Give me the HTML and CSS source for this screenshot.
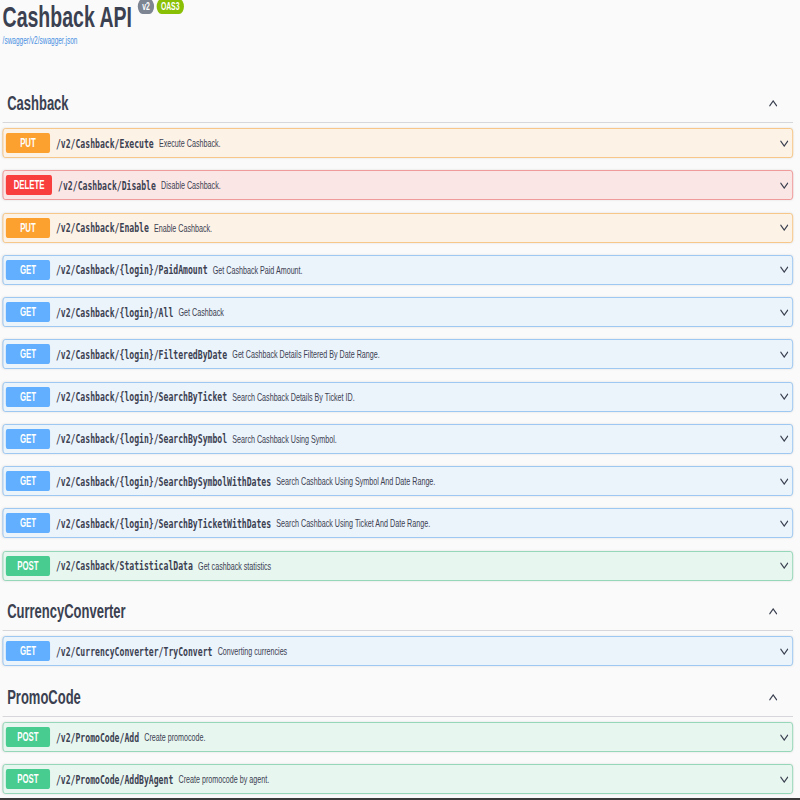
FILE: index.html
```html
<!DOCTYPE html>
<html lang="en">
<head>
<meta charset="utf-8">
<title>Cashback API</title>
<link rel="stylesheet" href="styles.css">
</head>
<body>
<div class="frame">
<div class="page">
  <div class="info">
    <h1 class="title">Cashback API <span class="stamp stamp-v">v2</span><span class="stamp stamp-oas">OAS3</span></h1>
    <a class="spec-link" href="#">/swagger/v2/swagger.json</a>
  </div>

  <section class="tag">
    <div class="tag-header">
      <h3 class="tag-name">Cashback</h3>
      <svg class="caret" viewBox="0 0 15 8" width="15" height="7"><polyline points="1,7 7.5,1 14,7"/></svg>
    </div>
    <div class="op op-put"><span class="method">PUT</span><span class="path">/v2/Cashback/Execute</span><span class="desc">Execute Cashback.</span><svg class="chev" viewBox="0 0 15 8" width="15" height="7"><polyline points="1,1 7.5,7 14,1"/></svg></div>
    <div class="op op-delete"><span class="method">DELETE</span><span class="path">/v2/Cashback/Disable</span><span class="desc">Disable Cashback.</span><svg class="chev" viewBox="0 0 15 8" width="15" height="7"><polyline points="1,1 7.5,7 14,1"/></svg></div>
    <div class="op op-put"><span class="method">PUT</span><span class="path">/v2/Cashback/Enable</span><span class="desc">Enable Cashback.</span><svg class="chev" viewBox="0 0 15 8" width="15" height="7"><polyline points="1,1 7.5,7 14,1"/></svg></div>
    <div class="op op-get"><span class="method">GET</span><span class="path">/v2/Cashback/{login}/PaidAmount</span><span class="desc">Get Cashback Paid Amount.</span><svg class="chev" viewBox="0 0 15 8" width="15" height="7"><polyline points="1,1 7.5,7 14,1"/></svg></div>
    <div class="op op-get"><span class="method">GET</span><span class="path">/v2/Cashback/{login}/All</span><span class="desc">Get Cashback</span><svg class="chev" viewBox="0 0 15 8" width="15" height="7"><polyline points="1,1 7.5,7 14,1"/></svg></div>
    <div class="op op-get"><span class="method">GET</span><span class="path">/v2/Cashback/{login}/FilteredByDate</span><span class="desc">Get Cashback Details Filtered By Date Range.</span><svg class="chev" viewBox="0 0 15 8" width="15" height="7"><polyline points="1,1 7.5,7 14,1"/></svg></div>
    <div class="op op-get"><span class="method">GET</span><span class="path">/v2/Cashback/{login}/SearchByTicket</span><span class="desc">Search Cashback Details By Ticket ID.</span><svg class="chev" viewBox="0 0 15 8" width="15" height="7"><polyline points="1,1 7.5,7 14,1"/></svg></div>
    <div class="op op-get"><span class="method">GET</span><span class="path">/v2/Cashback/{login}/SearchBySymbol</span><span class="desc">Search Cashback Using Symbol.</span><svg class="chev" viewBox="0 0 15 8" width="15" height="7"><polyline points="1,1 7.5,7 14,1"/></svg></div>
    <div class="op op-get"><span class="method">GET</span><span class="path">/v2/Cashback/{login}/SearchBySymbolWithDates</span><span class="desc">Search Cashback Using Symbol And Date Range.</span><svg class="chev" viewBox="0 0 15 8" width="15" height="7"><polyline points="1,1 7.5,7 14,1"/></svg></div>
    <div class="op op-get"><span class="method">GET</span><span class="path">/v2/Cashback/{login}/SearchByTicketWithDates</span><span class="desc">Search Cashback Using Ticket And Date Range.</span><svg class="chev" viewBox="0 0 15 8" width="15" height="7"><polyline points="1,1 7.5,7 14,1"/></svg></div>
    <div class="op op-post"><span class="method">POST</span><span class="path">/v2/Cashback/StatisticalData</span><span class="desc">Get cashback statistics</span><svg class="chev" viewBox="0 0 15 8" width="15" height="7"><polyline points="1,1 7.5,7 14,1"/></svg></div>
  </section>

  <section class="tag">
    <div class="tag-header">
      <h3 class="tag-name">CurrencyConverter</h3>
      <svg class="caret" viewBox="0 0 15 8" width="15" height="7"><polyline points="1,7 7.5,1 14,7"/></svg>
    </div>
    <div class="op op-get"><span class="method">GET</span><span class="path">/v2/CurrencyConverter/TryConvert</span><span class="desc">Converting currencies</span><svg class="chev" viewBox="0 0 15 8" width="15" height="7"><polyline points="1,1 7.5,7 14,1"/></svg></div>
  </section>

  <section class="tag">
    <div class="tag-header">
      <h3 class="tag-name">PromoCode</h3>
      <svg class="caret" viewBox="0 0 15 8" width="15" height="7"><polyline points="1,7 7.5,1 14,7"/></svg>
    </div>
    <div class="op op-post"><span class="method">POST</span><span class="path">/v2/PromoCode/Add</span><span class="desc">Create promocode.</span><svg class="chev" viewBox="0 0 15 8" width="15" height="7"><polyline points="1,1 7.5,7 14,1"/></svg></div>
    <div class="op op-post"><span class="method">POST</span><span class="path">/v2/PromoCode/AddByAgent</span><span class="desc">Create promocode by agent.</span><svg class="chev" viewBox="0 0 15 8" width="15" height="7"><polyline points="1,1 7.5,7 14,1"/></svg></div>
  </section>
</div>
</div>
</body>
</html>
```

FILE: styles.css
```css
html, body {
  margin: 0;
  padding: 0;
  overflow: hidden;
  background: #fafafa;
}

body {
  font-family: "Liberation Sans", Arial, sans-serif;
  color: #3b4151;
}

body::after {
  content: "";
  position: fixed;
  left: 0;
  right: 0;
  bottom: 0;
  height: 2px;
  background: #3a3a3a;
}

/* clip the squeezed page to the window width */
.frame {
  width: 800px;
  overflow: hidden;
}

/* the screenshot is horizontally condensed: lay out at natural width, then squeeze */
.page {
  width: 1231px;
  box-sizing: border-box;
  padding: 0 11px 0 4px;
  margin-right: -431px;
  transform: scaleX(0.65);
  transform-origin: 0 0;
}

.info {
  margin-bottom: 38px;
}

.title {
  margin: 0;
  font-size: 30px;
  font-weight: 700;
  line-height: 34.5px;
  color: #3b4151;
  white-space: nowrap;
}

.stamp {
  display: inline-block;
  vertical-align: top;
  height: 15px;
  line-height: 15px;
  padding: 0 6.5px;
  margin-top: -1px;
  border-radius: 8px;
  font-size: 10.5px;
  font-weight: 700;
  color: #fff;
}

.stamp-v {
  background: #7d8492;
  margin-left: 1px;
}

.stamp-oas {
  background: #89bf04;
  margin-left: 4px;
}

.spec-link {
  display: block;
  font-size: 10px;
  line-height: 12px;
  color: #4990e2;
  text-decoration: none;
}

.tag-header {
  display: flex;
  align-items: center;
  justify-content: space-between;
  height: 37.5px;
  padding: 0 23px 0 7px;
  border-bottom: 1px solid #d6d7da;
  margin-bottom: 5px;
}

.tag-name {
  margin: 0;
  font-size: 20px;
  font-weight: 700;
  line-height: 24px;
  margin-top: -1px;
}

.caret, .chev {
  fill: none;
  stroke: #3b4151;
  stroke-width: 1.6;
  flex: none;
}

.op {
  display: flex;
  align-items: center;
  height: 30px;
  box-sizing: border-box;
  padding: 0 5px 0 4px;
  margin-bottom: 12.25px;
  border: 1px solid;
  border-radius: 4px;
  box-shadow: 0 0 3px rgba(0, 0, 0, 0.12);
}

.method {
  display: inline-block;
  box-sizing: border-box;
  min-width: 68px;
  height: 20px;
  line-height: 20px;
  padding: 0 12px;
  border-radius: 3px;
  text-align: center;
  font-size: 12px;
  font-weight: 700;
  color: #fff;
  flex: none;
}

.path {
  margin-left: 9px;
  font-family: "DejaVu Sans Mono", "Liberation Mono", monospace;
  font-size: 12.5px;
  font-weight: 700;
  color: #3b4151;
  white-space: nowrap;
}

.desc {
  margin-left: 8px;
  font-size: 11px;
  color: #3b4151;
  white-space: nowrap;
  flex: 1;
}

.op-put { background: #fdf2e6; border-color: #f6bf75; }
.op-put .method { background: #fca130; }

.op-delete { background: #fbe6e6; border-color: #ee8a8a; }
.op-delete .method { background: #f93e3e; }

.op-get { background: #ebf3fb; border-color: #8ec0f0; }
.op-get .method { background: #61affe; }

.op-post { background: #e8f6f0; border-color: #86d2ae; }
.op-post .method { background: #49cc90; }
```
